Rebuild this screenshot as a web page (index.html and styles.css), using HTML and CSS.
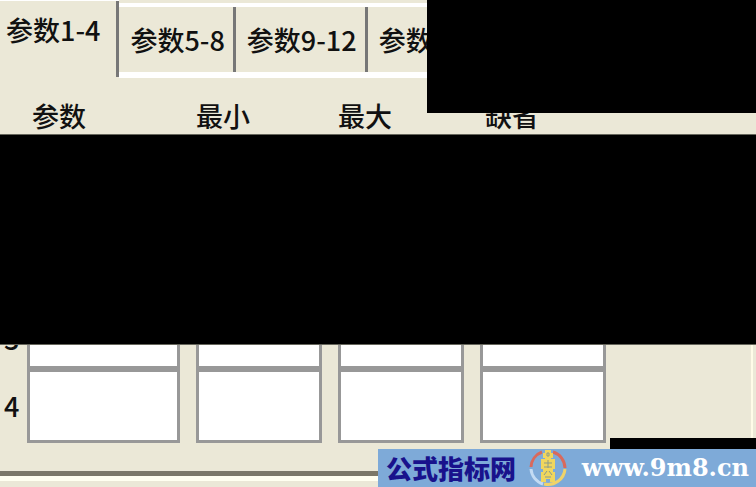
FILE: index.html
```html
<!DOCTYPE html>
<html lang="zh-CN">
<head>
<meta charset="utf-8">
<title>参数</title>
<link rel="stylesheet" href="styles.css">
</head>
<body>
<main class="panel">
  <div class="tabs" role="tablist">
    <button class="tab tab-active" role="tab" aria-selected="true">参数1-4</button>
    <button class="tab" role="tab" aria-selected="false">参数5-8</button>
    <button class="tab" role="tab" aria-selected="false">参数9-12</button>
    <button class="tab tab-last" role="tab" aria-selected="false">参数</button>
    <div class="cover cover-top"></div>
  </div>
  <div class="heads">
    <div class="cells">
      <span class="head-inset" id="c1">参数</span>
      <span id="c2">最小</span>
      <span id="c3">最大</span>
      <span class="head-inset" id="c4">缺省</span>
    </div>
  </div>
  <div class="band"></div>
  <div class="row row-under">
    <span class="num" id="r3">3</span>
    <div class="cells">
      <input class="field" type="text" aria-labelledby="r3 c1">
      <input class="field" type="text" aria-labelledby="r3 c2">
      <input class="field" type="text" aria-labelledby="r3 c3">
      <input class="field" type="text" aria-labelledby="r3 c4">
    </div>
  </div>
  <div class="row">
    <span class="num" id="r4">4</span>
    <div class="cells">
      <input class="field" type="text" aria-labelledby="r4 c1">
      <input class="field" type="text" aria-labelledby="r4 c2">
      <input class="field" type="text" aria-labelledby="r4 c3">
      <input class="field" type="text" aria-labelledby="r4 c4">
    </div>
  </div>
  <div class="rule"></div>
  <div class="mark">
    <div class="cover cover-bottom"></div>
    <span class="site">公式指标网</span>
    <svg class="logo" viewBox="0 0 38 38" aria-hidden="true">
      <g fill="none" stroke-width="3">
        <path d="M2 18A17 17 0 0 1 13 3" stroke="#d9695c"/>
        <path d="M24 3A17 17 0 0 1 36 19" stroke="#d9695c"/>
        <path d="M2 20A17 17 0 0 0 14 35" stroke="#c3dbf3"/>
        <path d="M36 20A17 17 0 0 1 15 35" stroke="#efd36a"/>
      </g>
      <path fill="#f0d65e" d="M16 1h6v3h2v5h-2v1h4v10h-2v3h2v10h-5v-3h-4v3h-5V23h2v-3h-2V10h4V9h-2V4h2z"/>
      <path fill="none" stroke="#8a9b8c" stroke-width="1" d="M18 4h2v3h-2zM15 14h8M15 18h8M19 11v8M15 26l3-4M23 26l-3-4M16 28h6"/>
    </svg>
    <a class="url" href="#">www.9m8.cn</a>
  </div>
</main>
</body>
</html>
```
FILE: styles.css
```css
* {
  box-sizing: border-box;
}

body {
  margin: 0;
  background: #ebe8d7;
  color: #111;
  font-family: "Noto Sans CJK SC", sans-serif;
  font-size: 27px;
  font-weight: 500;
  line-height: 40px;
}

.panel {
  position: relative;
  min-height: 100vh;
  overflow: hidden;
}

.tabs {
  position: relative;
  display: flex;
  align-items: flex-end;
  height: 78px;
}

.tab {
  flex: none;
  height: 75px;
  margin: 0;
  padding: 0 11px;
  border: 0 solid #fff;
  border-width: 4px 0 6px;
  background: linear-gradient(#777, #777) right / 3px 100% no-repeat #ebe8d7;
  color: inherit;
  font: inherit;
  white-space: nowrap;
}

.tab-active {
  align-self: flex-start;
  height: 77px;
  padding: 0 19px 18px 6px;
  border-width: 1px 0 0;
}

.tab-last {
  flex: 1 0 auto;
  background: #ebe8d7;
  text-align: left;
}

.cover {
  position: absolute;
  right: 0;
  background: #000;
}

.cover-top {
  top: 0;
  left: 427px;
  height: 113px;
}

.heads {
  height: 56px;
  padding: 18px 0 0 27px;
}

.cells {
  flex: 1;
  display: grid;
  grid-template-columns: 153fr 126fr 126fr 126fr 134fr;
  column-gap: 16px;
}

.head-inset {
  padding-left: 5px;
}

.band {
  position: relative;
  z-index: 1;
  height: 211px;
  border: 0 solid #66665c;
  border-width: 1px 0;
  background: #000;
}

.row {
  display: flex;
  height: 74px;
  box-shadow: inset -3px 0 #ebe8d7, inset -5px 0 #fffbe8;
}

.row-under {
  margin-top: -50px;
}

.num {
  width: 27px;
  padding-left: 4px;
  line-height: 74px;
}

.row-under .num {
  line-height: 88px;
}

.field {
  width: 100%;
  min-width: 0;
  height: 74px;
  margin: 0;
  padding: 0 8px;
  border: 3px solid #989898;
  border-radius: 0;
  background: #fff;
  font: inherit;
}

.rule {
  height: 14px;
  margin-top: 28px;
  border: solid #7b7869;
  border-width: 5px 0 0;
  background: linear-gradient(#fffff0 5px, #ebe8d7 5px);
}

.mark {
  position: absolute;
  right: 0;
  bottom: 0;
  display: flex;
  align-items: center;
  width: 50%;
  height: 38px;
  padding: 0 7px 0 8px;
  background: #7eaad8;
}

.cover-bottom {
  bottom: 100%;
  width: 146px;
  height: 11px;
}

.site {
  color: #19128c;
  font-size: 26px;
  font-weight: 900;
  line-height: 36px;
  white-space: nowrap;
}

.logo {
  width: 38px;
  height: 38px;
  margin-left: 13px;
}

.url {
  margin-left: auto;
  color: #fff;
  font-family: "DejaVu Serif", serif;
  font-size: 24px;
  font-weight: 700;
  line-height: 36px;
  text-decoration: none;
}
```
